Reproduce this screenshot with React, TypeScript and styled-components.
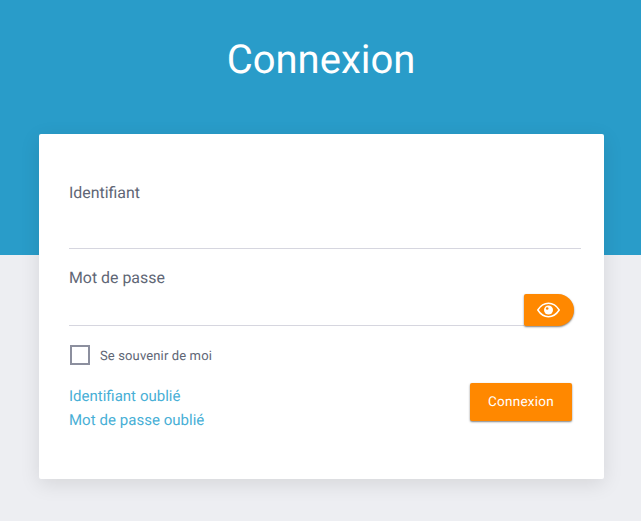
import React from 'react';
import styled, { createGlobalStyle } from 'styled-components';

const Global = createGlobalStyle`
  * { box-sizing: border-box; }
  body { margin: 0; background: #edeef2; font-family: Roboto, sans-serif; color: #606675; text-rendering: geometricPrecision; }
`;
const Page = styled.main`
  height: 521px;
  overflow: hidden;
  background: linear-gradient(#299cc9 255px, #edeef2 255px);
`;
const Title = styled.h1`
  margin: 0;
  height: 134px;
  padding: 36px 0 0 1px;
  text-align: center;
  font-size: 40px;
  line-height: 48px;
  font-weight: 400;
  color: #fff;
`;
const Card = styled.form`
  width: 565px;
  height: 345px;
  margin-left: 39px;
  padding: 47px 23px 0 30px;
  border-radius: 2px;
  background: #fff;
  box-shadow: 0 5px 20px rgba(0, 0, 0, 0.1);
`;
const Field = styled.div<{ $height: number; $top?: number }>`
  display: flex;
  flex-direction: column;
  height: ${p => p.$height}px;
  padding-top: ${p => p.$top ?? 0}px;
`;
const Label = styled.label`
  height: 24px;
  font-size: 15.9px;
  line-height: 24px;
`;
const InputRow = styled.div`
  display: flex;
  flex: 1;
  align-items: flex-end;
  border-bottom: 1px solid transparent;
`;
const Input = styled.input`
  flex: 1;
  min-width: 0;
  height: 32px;
  margin-bottom: -1px;
  padding: 0;
  border: 0;
  border-bottom: 1px solid #d6d6df;
  outline: 0;
  background: transparent;
`;
const Reveal = styled.button`
  display: flex;
  align-items: center;
  justify-content: center;
  width: 50px;
  height: 32px;
  margin: 0 7px -1px 0;
  padding: 0 1px 0 0;
  border: 0;
  border-radius: 2px 16px 16px 2px;
  background: #ff8800;
  box-shadow: 0 1px 2px rgba(0, 0, 0, 0.5);
`;
const Remember = styled.label`
  display: flex;
  align-items: center;
  gap: 10px;
  margin: 18px 0 0;
  height: 22px;
  font-size: 13px;
  line-height: 17px;
  letter-spacing: 0.13px;
`;
const RememberText = styled.span`
  padding-top: 2px;
`;
const Checkbox = styled.input`
  appearance: none;
  width: 20px;
  height: 20px;
  margin: 0 0 0 1px;
  border: 2px solid #8c8f9e;
`;
const Footer = styled.div`
  display: flex;
  justify-content: space-between;
  margin: 17px 9px 0 0;
`;
const Links = styled.nav`
  display: flex;
  flex-direction: column;
  padding-top: 1px;
  font-size: 15px;
  line-height: 24px;
  word-spacing: 0.2px;
`;
const Link = styled.a`
  color: #48afd6;
  text-decoration: none;
`;
const Submit = styled.button`
  width: 102px;
  height: 38px;
  padding: 0 0 1px;
  border: 0;
  border-radius: 2px;
  background: #ff8800;
  color: #fff;
  font: 13.5px Roboto, sans-serif;
  letter-spacing: 0.27px;
  text-rendering: geometricPrecision;
  box-shadow: 0 1px 2px rgba(0, 0, 0, 0.5);
`;

const Eye = () => (
  <svg width="23" height="16" viewBox="0 0 23 16" fill="none" aria-hidden="true">
    <path d="M.8 8C3.700 3.500 7.300 1.300 11.500 1.300S19.300 3.500 22.200 8c-2.900 4.500-6.500 6.700-10.700 6.700S3.700 12.500.8 8Z" stroke="#fff" strokeWidth="1.500" strokeLinejoin="round" />
    <circle cx="11.500" cy="8" r="4.500" fill="#fff" />
    <circle cx="10.200" cy="6.500" r="1.300" fill="#ff8800" />
  </svg>
);

export default function App() {
  return (
    <>
      <Global />
      <Page>
        <Title>Connexion</Title>
        <Card>
          <Field $height={68}>
            <Label htmlFor="login">Identifiant</Label>
            <InputRow><Input id="login" type="text" /></InputRow>
          </Field>
          <Field $height={77} $top={17}>
            <Label htmlFor="password">Mot de passe</Label>
            <InputRow>
              <Input id="password" type="password" />
              <Reveal type="button" aria-label="Afficher le mot de passe"><Eye /></Reveal>
            </InputRow>
          </Field>
          <Remember><Checkbox type="checkbox" /><RememberText>Se souvenir de moi</RememberText></Remember>
          <Footer>
            <Links><Link href="#">Identifiant oublié</Link><Link href="#">Mot de passe oublié</Link></Links>
            <Submit type="button">Connexion</Submit>
          </Footer>
        </Card>
      </Page>
    </>
  );
}
